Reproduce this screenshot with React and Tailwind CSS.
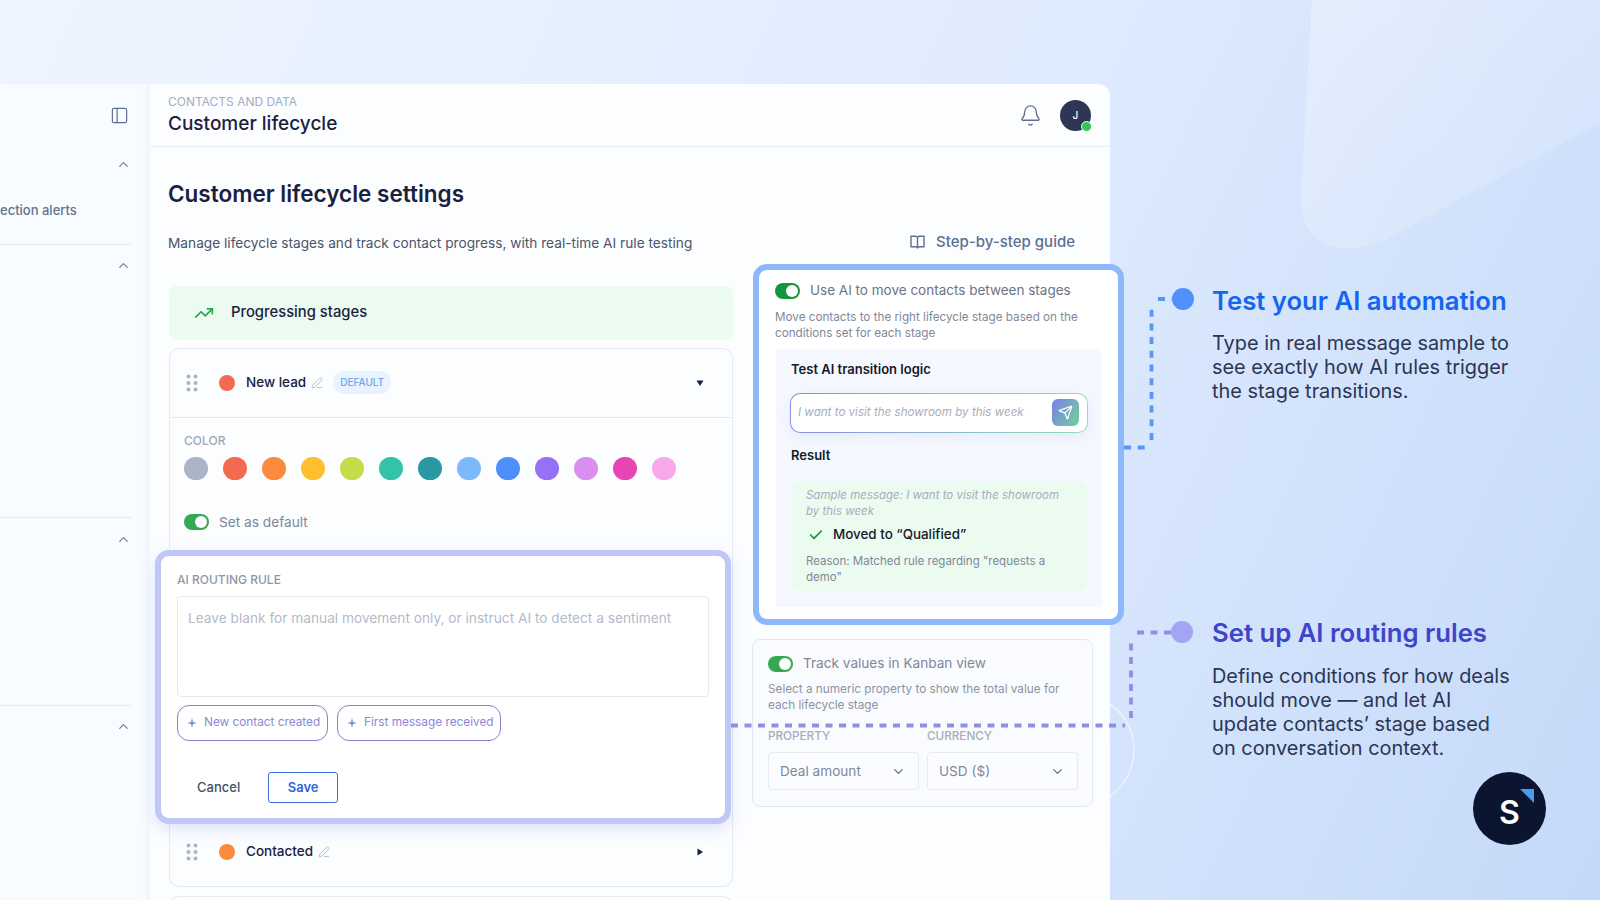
import { Bell, Check, ChevronDown, ChevronUp, PanelLeft, PenLine, Send, TrendingUp } from 'lucide-react';

const swatches = ['#aab4c6', '#f26a50', '#fb8a3c', '#fdbf2d', '#c5dc4a', '#34c3a8', '#2a97a3', '#7db8fb', '#4f8ffb', '#9670f5', '#d88ff0', '#e845b4', '#f9a8ec'];

function Toggle({ dark }) {
  return (
    <div className={`flex h-4 w-[25px] shrink-0 items-center justify-end rounded-full pr-[2px] ${dark ? 'bg-[#15963d]' : 'bg-[#34a853]'}`}>
      <div className="h-3 w-3 rounded-full bg-white" />
    </div>
  );
}

function DragDots() {
  return (
    <svg width="12" height="18" viewBox="0 0 12 18" className="shrink-0 fill-[#aab3c5]">
      <circle cx="2.5" cy="2.5" r="2" />
      <circle cx="9.5" cy="2.5" r="2" />
      <circle cx="2.5" cy="9" r="2" />
      <circle cx="9.5" cy="9" r="2" />
      <circle cx="2.5" cy="15.5" r="2" />
      <circle cx="9.5" cy="15.5" r="2" />
    </svg>
  );
}

function Spark() {
  return (
    <svg width="10" height="10" viewBox="0 0 10 10" className="shrink-0 fill-[#7a8fd8]">
      <path d="M5 0 L6 4 L10 5 L6 6 L5 10 L4 6 L0 5 L4 4 Z" />
    </svg>
  );
}

function Guide() {
  return (
    <svg width="15" height="14" viewBox="0 0 15 14" fill="none" stroke="currentColor" strokeWidth="1.4" strokeLinejoin="round" className="shrink-0">
      <path d="M7.5 3 C7.5 2 6.8 1.2 5.5 1.2 H1 V11.8 H5.5 C6.8 11.8 7.5 12.4 7.5 13 C7.5 12.4 8.2 11.8 9.5 11.8 H14 V1.2 H9.5 C8.2 1.2 7.5 2 7.5 3 Z M7.5 3 V13" />
    </svg>
  );
}

function Pill({ label, width }) {
  return (
    <div className={`flex h-9 items-center gap-[7px] rounded-xl border border-[#8583cf] pl-[9px] text-[11.8px] text-[#8b87d8] ${width}`}>
      <Spark />
      <span className="whitespace-nowrap">{label}</span>
    </div>
  );
}

function StageRow({ color, name, open, badge }) {
  return (
    <div className="flex items-center pl-[16px] pr-[28px]">
      <DragDots />
      <div className="ml-[21px] h-4 w-4 rounded-full" style={{ background: color }} />
      <span className="ml-[11px] text-[13.5px] font-medium text-[#1a2140]">{name}</span>
      <PenLine size={12} className="ml-[5px] text-[#b9bfcc]" />
      {badge && (
        <span className="ml-[10px] flex h-[23px] w-[58px] items-center justify-center rounded-full bg-[#e8f3fe] text-[10px] font-medium text-[#6ea8e8]">
          {badge}
        </span>
      )}
      <svg width="8" height="8" viewBox="0 0 8 8" className="ml-auto fill-[#1a2140]">
        <path d={open ? 'M0.5 1.5 H7.5 L4 7 Z' : 'M1.5 0.5 V7.5 L7 4 Z'} />
      </svg>
    </div>
  );
}

function Select({ value }) {
  return (
    <div className="flex h-[38px] w-[151px] items-center justify-between rounded border border-[#e5eaf3] bg-[#fbfcff] pl-[11px] pr-[12px] pt-px text-[13.6px] text-[#7f8899]">
      {value}
      <ChevronDown size={15} className="text-[#5f6f8f]" />
    </div>
  );
}

function SideSection({ height, top, children }) {
  return (
    <div className={`mr-[18px] border-b border-[#e6eaf1] pr-px ${height} ${top}`}>
      <div className="flex justify-end">
        <ChevronUp size={15} className="text-[#73809a]" />
      </div>
      {children}
    </div>
  );
}

export default function App() {
  return (
    <div className="relative flex h-[900px] w-[1600px] overflow-hidden bg-[linear-gradient(115deg,#edf5ff_0%,#dfebfe_55%,#c4d9f9_100%)] font-[Inter,sans-serif]">
      {/* backdrop shapes */}
      <svg width="1600" height="900" viewBox="0 0 1600 900" className="absolute left-0 top-0">
        <defs>
          <linearGradient id="shape" x1="0" y1="0" x2="1" y2="1">
            <stop offset="0" stopColor="#ffffff" stopOpacity="0.3" />
            <stop offset="1" stopColor="#ffffff" stopOpacity="0.1" />
          </linearGradient>
        </defs>
        <path d="M1312 0 L1301 195 Q1300 248 1350 248 Q1368 248 1385 240 L1600 123 V0 Z" fill="url(#shape)" />
        <circle cx="1078" cy="750" r="56" fill="none" stroke="#ffffff" strokeOpacity="0.55" strokeWidth="1.5" />
      </svg>

      <div className="relative mt-[84px] flex h-[816px] w-[1110px] shrink-0 rounded-tr-xl bg-[#fbfdff]">
        <aside className="w-[150px] shrink-0 bg-[#f8fbff] shadow-[inset_-8px_0_10px_-8px_rgba(200,215,240,0.25)]">
          <div className="flex h-[63px] items-center justify-end pr-[21px]">
            <PanelLeft size={19} strokeWidth={1.5} className="text-[#5f6f8f]" />
          </div>
          <SideSection height="h-[98px]" top="pt-[10px]">
            <div className="mt-[28px] whitespace-nowrap text-[13px] font-medium leading-5 text-[#64748b]">ection alerts</div>
          </SideSection>
          <SideSection height="h-[273px]" top="pt-[13px]" />
          <SideSection height="h-[188px]" top="pt-[14px]" />
          <div className="mr-[18px] flex justify-end pr-px pt-[13px]">
            <ChevronUp size={15} className="text-[#73809a]" />
          </div>
        </aside>

        <main className="w-[960px] shrink-0">
          <header className="flex h-[63px] items-center justify-between border-b border-[#e9edf3] pl-[18px] pr-[19px]">
            <div className="-mt-px">
              <div className="text-xs leading-4 text-[#a4adc0]">CONTACTS AND DATA</div>
              <div className="mt-[2px] text-[19px] font-medium leading-6 text-[#1a2140]">Customer lifecycle</div>
            </div>
            <div className="flex items-center gap-[18px]">
              <Bell size={23} strokeWidth={1.4} className="text-[#64708a]" />
              <div className="relative flex h-[31px] w-[31px] items-center justify-center rounded-full bg-[#2f3654] text-[10px] font-medium text-white">
                J
                <span className="absolute bottom-[-1px] right-[-1px] h-[11px] w-[11px] rounded-full border border-white bg-[#35c25a]" />
              </div>
            </div>
          </header>

          <div className="pl-[18px]">
            <h1 className="pt-[32px] text-[22.5px] font-semibold leading-[30px] text-[#1a2140]">Customer lifecycle settings</h1>
            <div className="mt-[23px] flex w-[907px] items-center justify-between">
              <p className="text-[13.7px] leading-5 text-[#4b5568]">Manage lifecycle stages and track contact progress, with real-time AI rule testing</p>
              <div className="-mt-px flex items-center gap-[11px] text-[15px] font-medium text-[#5f6f8f]">
                <Guide />
                Step-by-step guide
              </div>
            </div>

            <div className="mt-[10px] flex items-start">
              <div className="ml-px w-[564px] shrink-0 pt-[22px]">
                <div className="flex h-[54px] items-center gap-[17px] rounded-lg bg-[#ebfbf0] pl-[25px] text-[14.8px] font-medium text-[#1a2140]">
                  <TrendingUp size={20} className="text-[#2ea44f]" />
                  Progressing stages
                </div>

                <div className="mt-[8px] rounded-t-[10px] border-x border-t border-[#e6eaf1]">
                  <div className="flex h-[69px] flex-col justify-center border-b border-[#e6eaf1]">
                    <StageRow color="#f26a50" name="New lead" badge="DEFAULT" open />
                  </div>
                  <div className="pl-[14px] pt-[15px]">
                    <div className="text-xs font-medium leading-4 text-[#a0a8b8]">COLOR</div>
                    <div className="mt-[8px] flex gap-[15.5px]">
                      {swatches.map((c) => (
                        <div key={c} className="h-[23.5px] w-[23.5px] rounded-full" style={{ background: c }} />
                      ))}
                    </div>
                    <div className="mt-[32px] flex h-5 items-center gap-[10px] text-[13.7px] text-[#7f8899]">
                      <Toggle />
                      Set as default
                    </div>
                  </div>

                  <div className="relative -ml-[15px] mt-[18px] h-[274px] w-[576px] rounded-[14px] border-[6px] border-[#c0c6f5] bg-white pl-[16px] pt-[16px] shadow-[0_6px_16px_rgba(120,130,230,0.2)]">
                    <div className="text-xs font-medium leading-4 text-[#8f96a8]">AI ROUTING RULE</div>
                    <div className="mt-[8px] h-[101px] w-[532px] rounded border border-[#e6e9f0] pl-[10px] pt-[11px] text-[13.7px] leading-5 text-[#b5bac6]">
                      Leave blank for manual movement only, or instruct AI to detect a sentiment
                    </div>
                    <div className="mt-[8px] flex gap-[9px]">
                      <Pill label="New contact created" width="w-[151px]" />
                      <Pill label="First message received" width="w-[164px]" />
                    </div>
                    <div className="mt-[31px] flex items-center gap-[8px]">
                      <button className="h-[31px] px-5 text-[13px] font-medium text-[#465069]">Cancel</button>
                      <button className="h-[31px] w-[70px] rounded-[3px] border-[1.5px] border-[#3b6fdc] text-[13px] font-semibold text-[#2f66e0]">Save</button>
                    </div>
                  </div>
                </div>

                <div className="h-[63px] rounded-b-[10px] border-x border-b border-[#e6eaf1]">
                  <div className="flex h-[55px] flex-col justify-center">
                    <StageRow color="#fb8a3c" name="Contacted" />
                  </div>
                </div>
                <div className="mt-[9px] h-[60px] rounded-t-[10px] border-x border-t border-[#e6eaf1]" />
              </div>

              <div className="ml-[20px] w-[371px] shrink-0">
                <div className="rounded-[14px] border-[6px] border-[#8db8fb] bg-white pb-[12px] pl-[16px] pt-[11px]">
                  <div className="flex h-5 items-center gap-[10px] whitespace-nowrap text-[13.5px] text-[#6b7385]">
                    <Toggle dark />
                    Use AI to move contacts between stages
                  </div>
                  <p className="mt-[8px] w-[320px] text-[11.7px] leading-4 text-[#7f8899]">
                    Move contacts to the right lifecycle stage based on the conditions set for each stage
                  </p>
                  <div className="ml-px mt-[8px] h-[258px] w-[326px] bg-[#f5f8fe] pl-[15px] pt-[11px]">
                    <div className="text-[13px] font-semibold leading-[18px] text-[#14182b]">Test AI transition logic</div>
                    <div className="-ml-px mt-[15px] h-10 w-[298px] rounded-[10px] bg-[linear-gradient(90deg,#8b8bea,#8fe0b0)] p-px shadow-[0_4px_14px_rgba(130,140,230,0.12)]">
                      <div className="flex h-full items-center justify-between rounded-[9px] bg-white pl-[7px] pr-[8px] text-[11.6px] italic text-[#a8aebb]">
                        <span className="pt-px">I want to visit the showroom by this week</span>
                        <div className="flex h-[27px] w-[27px] items-center justify-center rounded-md bg-[linear-gradient(120deg,#7b7fe8,#6fd29a)]">
                          <Send size={15} className="text-white" />
                        </div>
                      </div>
                    </div>
                    <div className="mt-[13px] text-[13px] font-semibold leading-[18px] text-[#14182b]">Result</div>
                    <div className="mt-[17px] h-[110px] w-[296px] rounded-lg bg-[#ebfbf0] pl-[15px] pt-[6px]">
                      <p className="w-[265px] text-[11.5px] italic leading-4 text-[#a7adba]">Sample message: I want to visit the showroom by this week</p>
                      <div className="mt-[6px] flex h-5 items-center gap-[9px] pl-[2px] text-[13.4px] font-medium text-[#14182b]">
                        <Check size={16} strokeWidth={2.5} className="text-[#15963d]" />
                        Moved to “Qualified”
                      </div>
                      <p className="mt-[8px] w-[250px] text-[11.5px] leading-4 text-[#7f8899]">Reason: Matched rule regarding "requests a demo"</p>
                    </div>
                  </div>
                </div>

                <div className="-ml-px mt-[14px] h-[168px] w-[341px] rounded-lg border border-[#e2e8f3] bg-[#f9fbff] pl-[15px] pt-[14px]">
                  <div className="flex h-5 items-center gap-[10px] text-[13.6px] text-[#7f8899]">
                    <Toggle />
                    Track values in Kanban view
                  </div>
                  <p className="mt-[7px] w-[310px] text-[11.75px] leading-4 text-[#8b93a3]">Select a numeric property to show the total value for each lifecycle stage</p>
                  <div className="mt-[15px] flex gap-[8px]">
                    <div className="w-[151px]">
                      <div className="text-[11.7px] font-medium leading-4 text-[#a5adbd]">PROPERTY</div>
                      <div className="mt-[8px]"><Select value="Deal amount" /></div>
                    </div>
                    <div className="w-[151px]">
                      <div className="text-[11.7px] font-medium leading-4 text-[#a5adbd]">CURRENCY</div>
                      <div className="mt-[8px]"><Select value="USD ($)" /></div>
                    </div>
                  </div>
                </div>
              </div>
            </div>
          </div>
        </main>
      </div>

      <div className="relative w-[490px] pl-[102px] pr-[54px] pt-[285px]">
        <h2 className="whitespace-nowrap text-[25.7px] font-semibold leading-8 text-[#1565ee]">Test your AI automation</h2>
        <p className="mt-[14px] whitespace-nowrap text-[19.9px] leading-[24.2px] text-[#2c3553]">
          Type in real message sample to<br />see exactly how AI rules trigger<br />the stage transitions.
        </p>
        <h2 className="mt-[213px] whitespace-nowrap text-[25.7px] font-semibold leading-8 text-[#4044c8]">Set up AI routing rules</h2>
        <p className="mt-[15px] whitespace-nowrap text-[19.9px] leading-[24.2px] text-[#2c3553]">
          Define conditions for how deals<br />should move — and let AI<br />update contacts’ stage based<br />on conversation context.
        </p>
        <div className="relative ml-auto mt-[12px] flex h-[73px] w-[73px] items-center justify-center rounded-full bg-[#0c1530] pt-[8px] text-[32px] font-semibold text-white">
          S
          <svg width="14" height="14" viewBox="0 0 14 14" className="absolute right-[12px] top-[17px] fill-[#4a9be8]">
            <path d="M0 0 H14 V14 Z" />
          </svg>
        </div>
      </div>

      {/* dotted connectors from the highlighted cards to their captions */}
      <svg width="1600" height="900" viewBox="0 0 1600 900" className="pointer-events-none absolute left-0 top-0">
        <path d="M1124 447.5 H1145 M1151.5 440 V306 M1158 299 H1172" fill="none" stroke="#5b96f5" strokeWidth="3.8" strokeDasharray="7 6.7" />
        <circle cx="1183" cy="299" r="11" fill="#4f90fb" />
        <path d="M731 725.5 H1125 M1131 718 V640 M1137 632.5 H1175" fill="none" stroke="#8f8fe8" strokeWidth="3.8" strokeDasharray="7 6.5" />
        <circle cx="1182" cy="632" r="11" fill="#a3a4f2" />
      </svg>
    </div>
  );
}
